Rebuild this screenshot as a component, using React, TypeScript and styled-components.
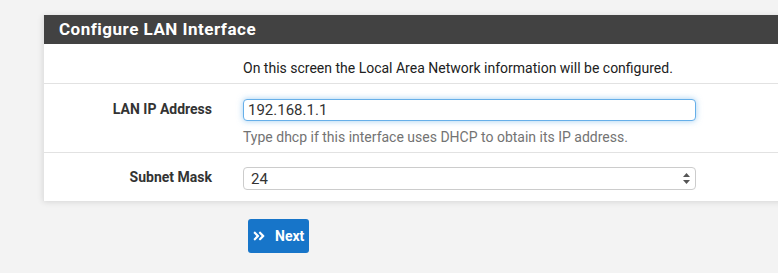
import styled, { createGlobalStyle } from "styled-components";
import { FaAngleDoubleRight } from "react-icons/fa";

const GlobalStyle = createGlobalStyle`
  body {
    margin: 0;
    background: #f3f3f3;
    font-family: Roboto, "Liberation Sans", sans-serif;
    font-size: 14px;
    color: #212121;
    overflow: hidden;
  }
`;

const Page = styled.div`
  padding: 15px 0 0 43px;
  height: 258px;
  overflow: hidden;
`;

const Panel = styled.div`
  width: 800px;
  background: #fff;
  box-shadow: 0 1px 6px rgba(0, 0, 0, 0.12);
  border-left: 1px solid #e4e4e4;
`;

const Heading = styled.div`
  height: 29px;
  background: #424242;
  color: #fff;
  font-weight: 700;
  font-size: 17px;
  letter-spacing: 0.5px;
  padding-left: 15px;
  line-height: 29px;
`;

const Row = styled.div<{ $pt: number; $pb: number; $last?: boolean }>`
  display: grid;
  grid-template-columns: 184px 453px;
  padding: ${(p) => p.$pt}px 0 ${(p) => p.$pb}px;
  border-bottom: ${(p) => (p.$last ? "none" : "1px solid #e2e2e2")};
`;

const Label = styled.div`
  text-align: right;
  padding-right: 16px;
  font-weight: 700;
  line-height: 20px;
  color: #333;
`;

const Field = styled.div`
  padding-left: 15px;
  line-height: 20px;
`;

const Input = styled.input`
  box-sizing: border-box;
  width: 453px;
  height: 22px;
  padding: 0 4px;
  border: 1px solid #66afe9;
  border-radius: 4px;
  box-shadow: 0 0 6px rgba(102, 175, 233, 0.6);
  font: inherit;
  font-size: 15px;
  color: #333;
  outline: none;
  display: block;
`;

const Help = styled.div`
  margin-top: 6px;
  color: #737373;
`;

const SelectWrap = styled.div`
  position: relative;
  width: 453px;
`;

const Select = styled.select`
  box-sizing: border-box;
  width: 453px;
  height: 23px;
  padding: 0 7px;
  border: 1px solid #ccc;
  border-radius: 4px;
  background: #fff;
  font: inherit;
  font-size: 15px;
  color: #333;
  appearance: none;
  display: block;
`;

const Arrows = styled.svg`
  position: absolute;
  right: 6px;
  top: 6px;
  pointer-events: none;
`;

const Actions = styled.div`
  padding: 18px 0 0 205px;
`;

const Button = styled.button`
  display: flex;
  align-items: center;
  gap: 9px;
  height: 34px;
  width: 61px;
  padding: 0 0 0 4px;
  border: none;
  border-radius: 3px;
  background: #1775c9;
  color: #fff;
  font: inherit;
  font-weight: 700;
  font-size: 14px;
`;

export default function App() {
  return (
    <Page>
      <GlobalStyle />
      <Panel>
        <Heading>Configure LAN Interface</Heading>
        <Row $pt={14} $pb={5}>
          <Label />
          <Field>On this screen the Local Area Network information will be configured.</Field>
        </Row>
        <Row $pt={15} $pb={5}>
          <Label>LAN IP Address</Label>
          <Field>
            <Input defaultValue="192.168.1.1" />
            <Help>Type dhcp if this interface uses DHCP to obtain its IP address.</Help>
          </Field>
        </Row>
        <Row $pt={14} $pb={11} $last>
          <Label>Subnet Mask</Label>
          <Field>
            <SelectWrap>
              <Select defaultValue="24">
                <option value="24">24</option>
              </Select>
              <Arrows width="7" height="11" viewBox="0 0 7 11">
                <path d="M3.5 0 L7 4 L0 4 Z M3.5 11 L7 7 L0 7 Z" fill="#555" />
              </Arrows>
            </SelectWrap>
          </Field>
        </Row>
      </Panel>
      <Actions>
        <Button>
          <FaAngleDoubleRight size={14} />
          Next
        </Button>
      </Actions>
    </Page>
  );
}
